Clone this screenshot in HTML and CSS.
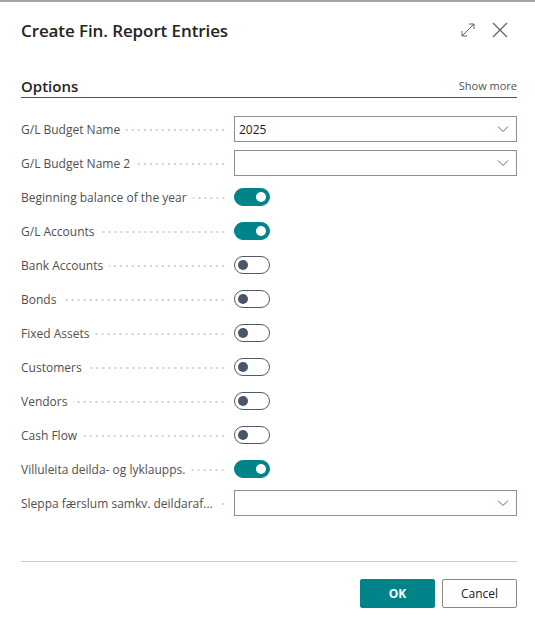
FILE: index.html
```html
<!DOCTYPE html>
<html>
<head>
<meta charset="utf-8">
<link rel="stylesheet" href="styles.css">
</head>
<body>
<div class="topstrip"></div>
<div class="dialog">
  <div class="header">
    <h1 class="title">Create Fin. Report Entries</h1>
    <div class="header-icons">
      <svg class="icon" width="16" height="16" viewBox="0 0 16 16"><path d="M2 14 L14 2 M9 2 H14 V7 M2 9 V14 H7" fill="none" stroke="#616161" stroke-width="1"/></svg>
      <svg class="icon close" width="16" height="16" viewBox="0 0 16 16"><path d="M1 1 L15 15 M15 1 L1 15" fill="none" stroke="#616161" stroke-width="1.2"/></svg>
    </div>
  </div>
  <div class="section-head">
    <span class="section-title">Options</span>
    <span class="show-more">Show more</span>
  </div>
  <div class="form">
    <div class="row"><div class="label"><span class="text">G/L Budget Name</span><span class="dots"></span></div><div class="field"><div class="select"><span class="value">2025</span><svg class="chev" width="12" height="8" viewBox="0 0 12 8"><path d="M1 1.5 L6 6.5 L11 1.5" fill="none" stroke="#4f6b8a" stroke-width="1"/></svg></div></div></div>
    <div class="row"><div class="label"><span class="text">G/L Budget Name 2</span><span class="dots"></span></div><div class="field"><div class="select"><span class="value"></span><svg class="chev" width="12" height="8" viewBox="0 0 12 8"><path d="M1 1.5 L6 6.5 L11 1.5" fill="none" stroke="#4f6b8a" stroke-width="1"/></svg></div></div></div>
    <div class="row"><div class="label"><span class="text">Beginning balance of the year</span><span class="dots"></span></div><div class="field"><span class="toggle on"><span class="knob"></span></span></div></div>
    <div class="row"><div class="label"><span class="text">G/L Accounts</span><span class="dots"></span></div><div class="field"><span class="toggle on"><span class="knob"></span></span></div></div>
    <div class="row"><div class="label"><span class="text">Bank Accounts</span><span class="dots"></span></div><div class="field"><span class="toggle"><span class="knob"></span></span></div></div>
    <div class="row"><div class="label"><span class="text">Bonds</span><span class="dots"></span></div><div class="field"><span class="toggle"><span class="knob"></span></span></div></div>
    <div class="row"><div class="label"><span class="text">Fixed Assets</span><span class="dots"></span></div><div class="field"><span class="toggle"><span class="knob"></span></span></div></div>
    <div class="row"><div class="label"><span class="text">Customers</span><span class="dots"></span></div><div class="field"><span class="toggle"><span class="knob"></span></span></div></div>
    <div class="row"><div class="label"><span class="text">Vendors</span><span class="dots"></span></div><div class="field"><span class="toggle"><span class="knob"></span></span></div></div>
    <div class="row"><div class="label"><span class="text">Cash Flow</span><span class="dots"></span></div><div class="field"><span class="toggle"><span class="knob"></span></span></div></div>
    <div class="row"><div class="label"><span class="text">Villuleita deilda- og lyklaupps.</span><span class="dots"></span></div><div class="field"><span class="toggle on"><span class="knob"></span></span></div></div>
    <div class="row"><div class="label"><span class="text">Sleppa færslum samkv. deildaraf...</span><span class="dots"></span></div><div class="field"><div class="select"><span class="value"></span><svg class="chev" width="12" height="8" viewBox="0 0 12 8"><path d="M1 1.5 L6 6.5 L11 1.5" fill="none" stroke="#4f6b8a" stroke-width="1"/></svg></div></div></div>
  </div>
  <div class="footer">
    <button class="btn primary">OK</button>
    <button class="btn">Cancel</button>
  </div>
</div>
</body>
</html>
```
FILE: styles.css
```css
html, body {
  margin: 0;
  padding: 0;
  background: #ffffff;
}
body {
  width: 535px;
  height: 625px;
  overflow: hidden;
  font-family: "Open Sans", "Noto Sans", sans-serif;
  color: #212121;
}
.topstrip {
  height: 2px;
  background: #a6a6a6;
}
.dialog {
  padding: 0 18px 0 21px;
}
.header {
  display: flex;
  align-items: center;
  justify-content: space-between;
  height: 56px;
}
.title {
  margin: 0;
  font-size: 17px;
  font-weight: 600;
  color: #242424;
  letter-spacing: -0.1px;
}
.header-icons {
  display: flex;
  align-items: center;
  gap: 16px;
  padding-right: 9px;
}
.section-head {
  margin-top: 18px;
  display: flex;
  justify-content: space-between;
  align-items: flex-end;
  border-bottom: 1px solid #4a5665;
  padding-bottom: 1px;
}
.section-title {
  font-size: 15px;
  font-weight: 600;
  color: #242424;
}
.show-more {
  font-size: 11px;
  color: #505050;
  padding-bottom: 3px;
}
.form {
  margin-top: 14px;
  display: flex;
  flex-direction: column;
}
.row {
  display: flex;
  align-items: center;
  height: 34px;
}
.label {
  width: 213px;
  display: flex;
  align-items: center;
  font-size: 12px;
  color: #505050;
}
.text {
  white-space: nowrap;
}
.dots {
  flex: 1;
  height: 2px;
  margin: 2px 8px 0 6px;
  background-image: radial-gradient(circle, #cfcfcf 0.7px, transparent 1px);
  background-size: 6px 2px;
  background-position: right center;
}
.field {
  flex: 1;
}
.select {
  height: 24px;
  border: 1px solid #8a909a;
  display: flex;
  align-items: center;
  justify-content: space-between;
  padding: 0 7px 0 4px;
}
.value {
  font-size: 12px;
  color: #212121;
}
.toggle {
  display: flex;
  align-items: center;
  height: 16px;
  border: 1px solid #505a66;
  border-radius: 10px;
  padding: 0 3px;
  box-sizing: content-box;
  width: 28px;
}
.toggle .knob {
  width: 10px;
  height: 10px;
  border-radius: 50%;
  background: #4a5568;
}
.toggle.on {
  background: #00848a;
  border-color: #00848a;
  justify-content: flex-end;
}
.toggle.on .knob {
  background: #ffffff;
}
.footer {
  margin-top: 41px;
  border-top: 1px solid #c8c8c8;
  padding-top: 17px;
  display: flex;
  justify-content: flex-end;
  gap: 7px;
}
.btn {
  width: 75px;
  height: 29px;
  font-family: "Open Sans", "Noto Sans", sans-serif;
  font-size: 12px;
  border: 1px solid #8a8886;
  background: #ffffff;
  color: #212121;
  border-radius: 2px;
  padding: 0;
}
.btn.primary {
  background: #00848a;
  border-color: #00848a;
  color: #ffffff;
  font-weight: 700;
}
```
